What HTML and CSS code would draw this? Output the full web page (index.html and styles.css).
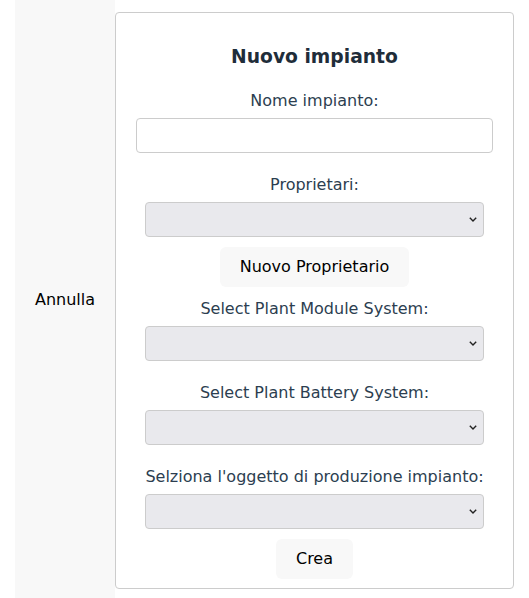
FILE: index.html
```html
<!DOCTYPE html>
<html lang="it">
<head>
<meta charset="utf-8">
<title>Nuovo impianto</title>
<link rel="stylesheet" href="styles.css">
</head>
<body>
<div class="page">
  <aside class="side">
    <span class="cancel">Annulla</span>
  </aside>
  <main class="card">
    <h3 class="title">Nuovo impianto</h3>
    <label class="label" for="nome">Nome impianto:</label>
    <input class="text-input" id="nome" type="text">
    <label class="label gap" for="prop">Proprietari:</label>
    <select class="select" id="prop"><option></option></select>
    <button class="btn" type="button">Nuovo Proprietario</button>
    <label class="label after-btn" for="mod">Select Plant Module System:</label>
    <select class="select" id="mod"><option></option></select>
    <label class="label gap" for="bat">Select Plant Battery System:</label>
    <select class="select" id="bat"><option></option></select>
    <label class="label gap" for="obj">Selziona l'oggetto di produzione impianto:</label>
    <select class="select" id="obj"><option></option></select>
    <button class="btn last" type="button">Crea</button>
  </main>
</div>
</body>
</html>
```

FILE: styles.css
```css
html, body {
  margin: 0;
  padding: 0;
  background: #ffffff;
  font-family: "DejaVu Sans", sans-serif;
  font-size: 16px;
}

.page {
  display: flex;
  align-items: stretch;
  padding: 0 15px;
  min-height: 598px;
  box-sizing: border-box;
}

.side {
  width: 100px;
  flex: 0 0 100px;
  background: #f8f8f8;
  display: flex;
  align-items: center;
  justify-content: center;
}

.cancel {
  color: #000000;
}

.card {
  flex: 1;
  margin: 12px 0 9px;
  border: 1px solid #cccccc;
  border-radius: 4px;
  padding: 10px 20px 0;
  display: flex;
  flex-direction: column;
  align-items: center;
  text-align: center;
}

.title {
  margin: 23px 0 24px;
  font-size: 18.72px;
  font-weight: bold;
  color: #1f2d3a;
}

.label {
  display: block;
  color: #2c3e50;
  line-height: 19px;
  margin-bottom: 8px;
}

.label.gap {
  margin-top: 22px;
}

.label.after-btn {
  margin-top: 2px;
}

.text-input {
  width: 100%;
  height: 35px;
  box-sizing: border-box;
  border: 1px solid #cccccc;
  border-radius: 4px;
  background: #ffffff;
  font: inherit;
}

.select {
  width: 95%;
  height: 35px;
  box-sizing: border-box;
  border: 1px solid #cccccc;
  border-radius: 4px;
  background-color: #e9e9ed;
  background-image: url("data:image/svg+xml,%3Csvg xmlns='http://www.w3.org/2000/svg' width='8' height='5' viewBox='0 0 8 5'%3E%3Cpath d='M0.8 0.8 L4 4 L7.2 0.8' fill='none' stroke='%23222' stroke-width='1.4'/%3E%3C/svg%3E");
  background-repeat: no-repeat;
  background-position: right 6px center;
  background-size: 8px 5px;
  -webkit-appearance: none;
  appearance: none;
  font: inherit;
}

.btn {
  margin: 10px 0 10px;
  padding: 10px 20px 11px;
  border: none;
  border-radius: 6px;
  background: #f8f8f8;
  color: #000000;
  font: inherit;
  font-size: 16px;
}

.btn.last {
  margin-bottom: 0;
}
```
